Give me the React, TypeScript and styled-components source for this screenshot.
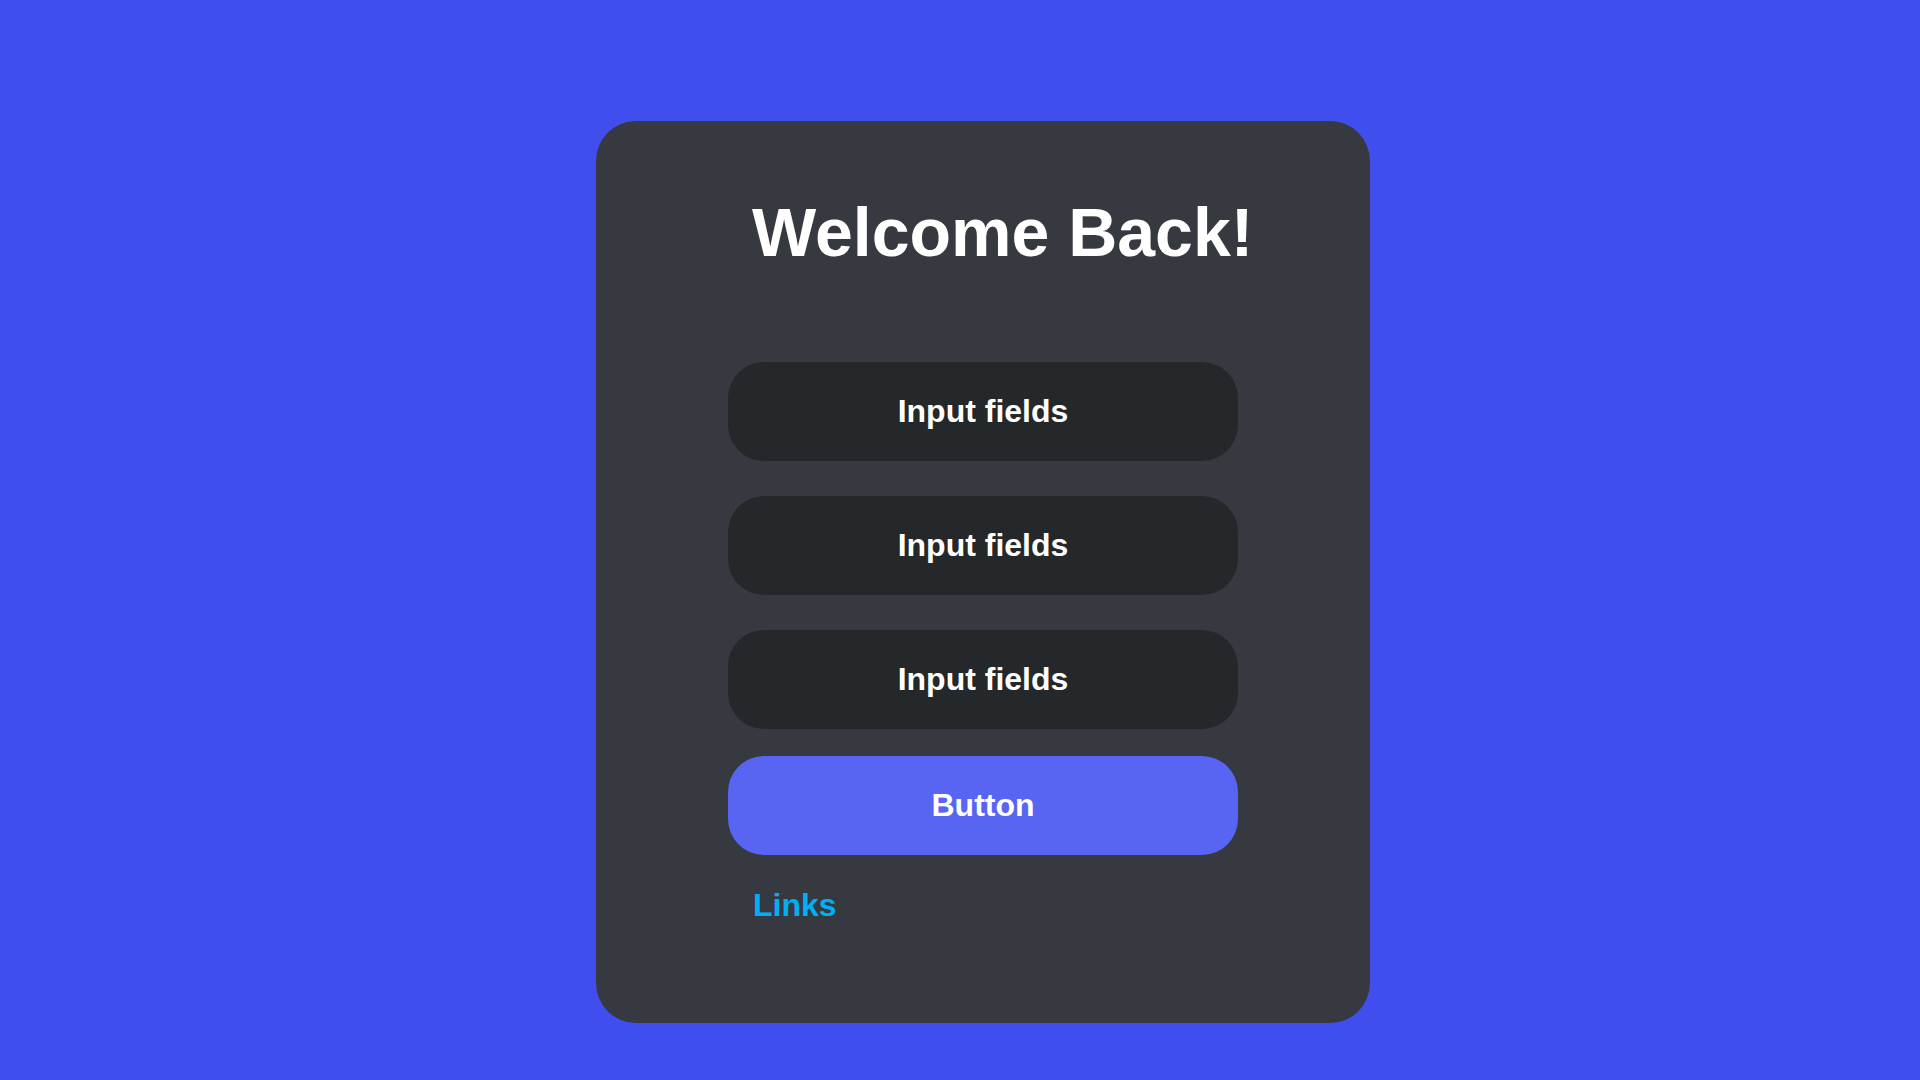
import React from "react";
import styled, { createGlobalStyle } from "styled-components";

const GlobalStyle = createGlobalStyle`
  body {
    margin: 0;
    background-color: #404eed;
    font-family: "Liberation Sans", Arial, Helvetica, sans-serif;
  }
`;

const Page = styled.div`
  display: flex;
  justify-content: center;
  align-items: flex-start;
  min-height: 100vh;
  box-sizing: border-box;
  padding: 121px 0 0 46px;
`;

const Card = styled.div`
  width: 774px;
  box-sizing: border-box;
  padding: 72px 132px 99px;
  border-radius: 40px;
  background-color: #36393f;
  display: flex;
  flex-direction: column;
`;

const Title = styled.h1`
  margin: 0 0 91px 24px;
  font-size: 68px;
  font-weight: 700;
  line-height: normal;
  white-space: nowrap;
  color: #ffffff;
`;

const FieldList = styled.div`
  display: flex;
  flex-direction: column;
  gap: 35px;
`;

const Field = styled.input`
  height: 99px;
  box-sizing: border-box;
  border: none;
  outline: none;
  border-radius: 36px;
  background-color: #25282b;
  color: #ffffff;
  font-family: inherit;
  font-size: 32px;
  font-weight: 700;
  text-align: center;

  &::placeholder {
    color: #ffffff;
    opacity: 1;
  }
`;

const SubmitButton = styled.button`
  margin-top: 27px;
  height: 99px;
  border: none;
  border-radius: 36px;
  background-color: #5865f2;
  color: #ffffff;
  font-family: inherit;
  font-size: 32px;
  font-weight: 700;
  cursor: pointer;
`;

const Link = styled.a`
  align-self: flex-start;
  margin: 32px 0 0 25px;
  font-size: 32px;
  font-weight: 700;
  line-height: normal;
  color: #00aff4;
  text-decoration: none;
`;

export default function App() {
  return (
    <>
      <GlobalStyle />
      <Page>
        <Card>
          <Title>Welcome Back!</Title>
          <FieldList>
            <Field placeholder="Input fields" />
            <Field placeholder="Input fields" />
            <Field placeholder="Input fields" />
          </FieldList>
          <SubmitButton>Button</SubmitButton>
          <Link href="#">Links</Link>
        </Card>
      </Page>
    </>
  );
}
